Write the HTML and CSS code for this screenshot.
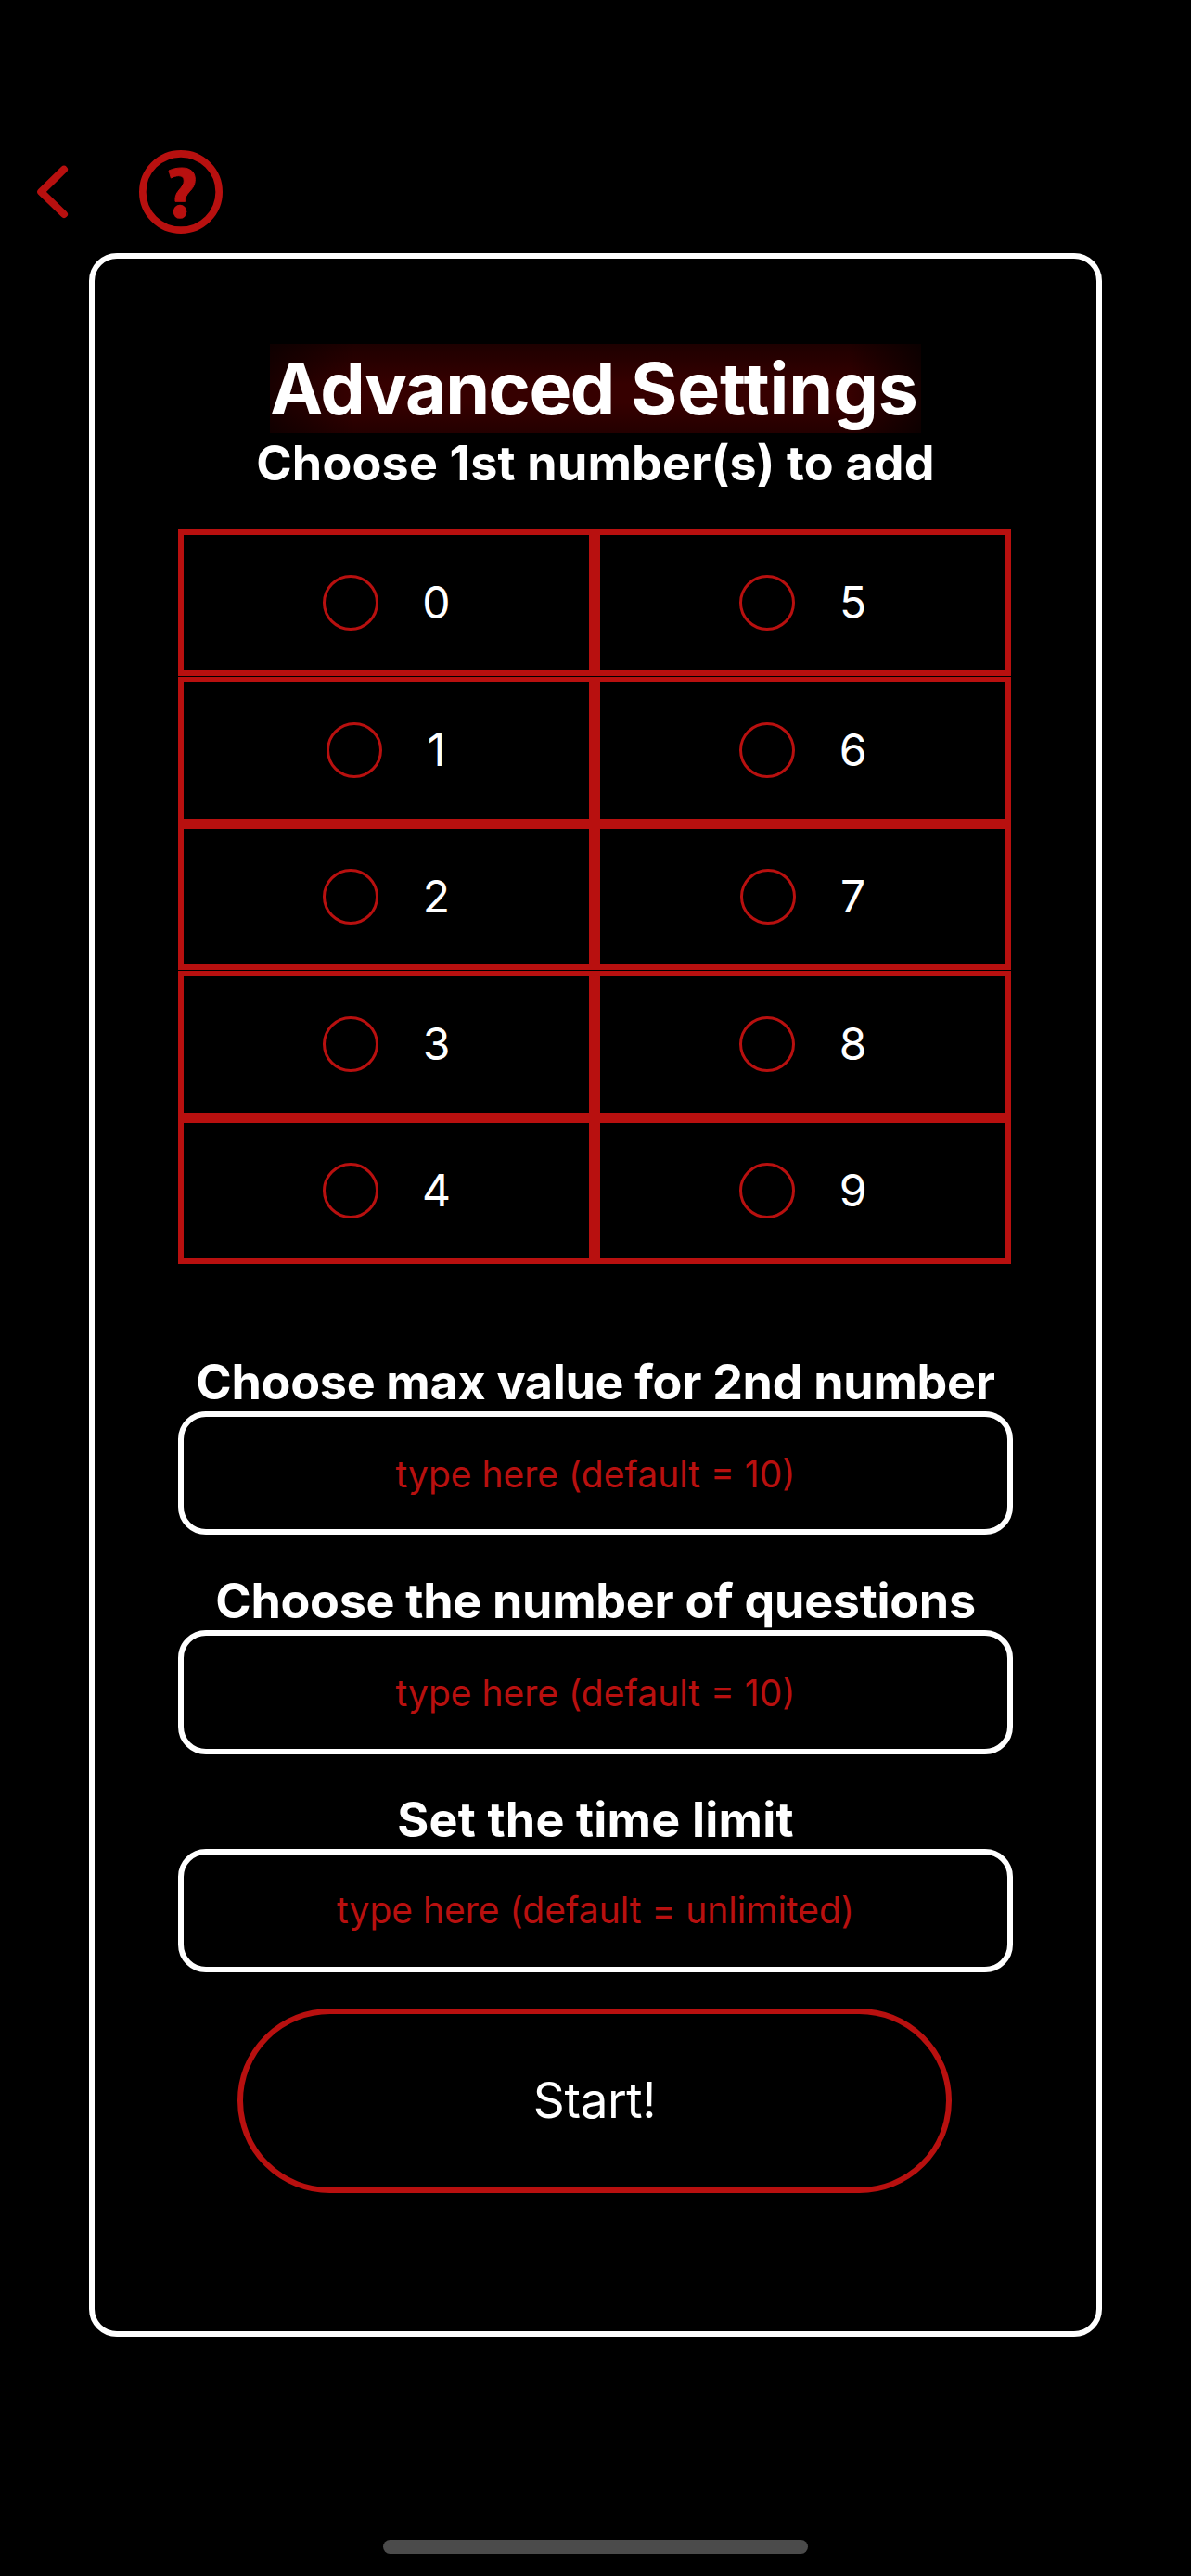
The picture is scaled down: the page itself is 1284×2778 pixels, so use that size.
FILE: index.html
```html
<!DOCTYPE html>
<html lang="en">
<head>
<meta charset="utf-8">
<title>Advanced Settings</title>
<link rel="stylesheet" href="styles.css">
</head>
<body>
<div class="screen">
  <header class="topbar">
    <svg class="back" viewBox="0 0 34 58" aria-label="Back"><path d="M29 4.700 L4.200 28.900 L29 53"/></svg>
    <svg class="help" viewBox="0 0 270 270" aria-label="Help">
      <circle cx="135" cy="135" r="123.500"/>
      <path d="M96 66 C109 60 122 57 138 57 C166 57 181 71 181 94 C181 113 173 123 163 134 C153 145 149 151 149 166 L117 166 C116 150 119 141 129 129 C139 117 145 110 145 99 C145 88 139 83 128 83 C118 83 111 86 103 90 Z"/>
      <ellipse cx="132" cy="199" rx="22" ry="22.500"/>
    </svg>
  </header>
  <main class="panel">
    <h1 class="title"><span class="tight">Advanced</span> Settings</h1>
    <h2 class="label wide">Choose 1st number(s) to add</h2>
    <div class="grid">
      <label class="cell"><i></i><b>0</b></label><label class="cell"><i></i><b>5</b></label>
      <label class="cell tall"><i></i><b class="one">1</b></label><label class="cell tall"><i></i><b>6</b></label>
      <label class="cell"><i></i><b>2</b></label><label class="cell"><i></i><b class="seven">7</b></label>
      <label class="cell tall"><i></i><b>3</b></label><label class="cell tall"><i></i><b>8</b></label>
      <label class="cell"><i></i><b>4</b></label><label class="cell"><i></i><b>9</b></label>
    </div>
    <section class="field"><h2 class="label">Choose max value for 2nd number</h2><div class="input">type here (default = 10)</div></section>
    <section class="field"><h2 class="label">Choose the number of questions</h2><div class="input second">type here (default = 10)</div></section>
    <section class="field"><h2 class="label wide">Set the time limit</h2><div class="input last">type here (default = unlimited)</div></section>
    <div class="start">Start!</div>
  </main>
  <div class="home"></div>
</div>
</body>
</html>
```
FILE: styles.css
```css
* { box-sizing: border-box; }
body { margin: 0; background: #000; color: #fff; font-family: Inter, "Liberation Sans", sans-serif; }
.screen { width: 1284px; height: 2778px; display: flex; flex-direction: column; align-items: center; overflow: hidden; }
.topbar { width: 100%; height: 273px; flex: none; padding: 162px 0 0 40px; display: flex; align-items: flex-start; }
.back { width: 34px; height: 58px; margin: 16px 76px 0 0; fill: none; stroke: #b8100f; stroke-width: 8; stroke-linecap: round; stroke-linejoin: round; }
.help { width: 90px; height: 90px; fill: #b8100f; }
.help circle { fill: none; stroke: #b8100f; stroke-width: 23; }
.help path { stroke: #b8100f; stroke-width: 3; }
.panel { width: 1092px; height: 2247px; flex: none; border: 6px solid #fff; border-radius: 30px; padding-top: 92px; display: flex; flex-direction: column; align-items: center; }
.title { margin: 0; width: 702px; height: 96px; font-size: 77px; line-height: 96px; font-weight: 700; letter-spacing: -0.1px; text-align: left; white-space: nowrap; background: linear-gradient(90deg, rgba(0,0,0,.55), transparent 13%, transparent 89%, rgba(0,0,0,.65)), linear-gradient(#1e0000, #360000 45%, #360000 66%, #240000); }
.tight { letter-spacing: -1.5px; }
.label { margin: 0; height: 64px; font-size: 52px; line-height: 66px; font-weight: 700; letter-spacing: -0.28px; text-align: center; white-space: nowrap; }
.wide { letter-spacing: 0.2px; }
.grid { margin: 40px 2px 101px 0; width: 898px; display: grid; grid-template-columns: 449px 449px; grid-template-rows: 159px 158px 159px 158px 158px; }
.cell { height: 158px; border: 6px solid #b8100f; display: flex; align-items: center; justify-content: center; gap: 48px; }
.tall { height: 159px; padding-bottom: 1px; }
.cell i { width: 60px; height: 60px; border: 3px solid #b8100f; border-radius: 50%; }
.cell b { width: 29px; font-size: 48px; line-height: 58px; font-weight: 400; display: flex; justify-content: center; }
.cell .one { width: 21px; }
.cell .seven { width: 27px; }
.field { height: 236px; }
.field .label { height: 58px; line-height: 53px; }
.input { width: 900px; height: 133px; border: 6px solid #fff; border-radius: 30px; color: #b8100f; font-size: 39px; line-height: 123px; text-align: center; white-space: nowrap; }
.second { height: 134px; }
.last { line-height: 120px; }
.start { width: 770px; height: 199px; margin: -6px 2px 0 0; flex: none; border: 6px solid #b8100f; border-radius: 100px; font-size: 53px; line-height: 186px; letter-spacing: -0.4px; text-align: center; }
.home { width: 458px; height: 15px; margin-top: 219px; border-radius: 8px; background: #4b4b4b; }
```
